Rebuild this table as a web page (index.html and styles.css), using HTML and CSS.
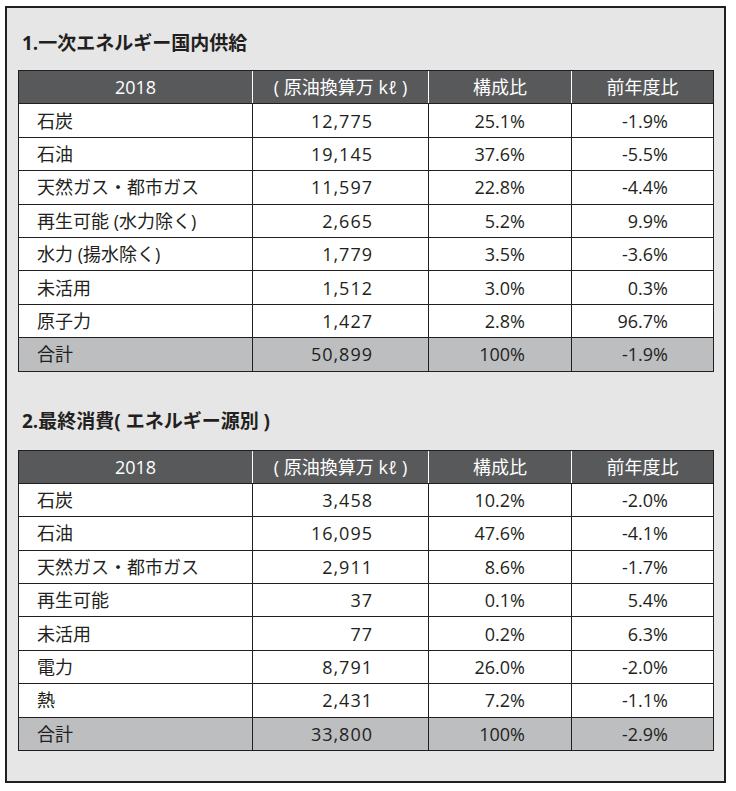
FILE: index.html
```html
<!DOCTYPE html>
<html lang="ja">
<head>
<meta charset="utf-8">
<title>エネルギー需給</title>
<link rel="stylesheet" href="styles.css">
</head>
<body>
<div class="panel">
  <h2 class="title">1.一次エネルギー国内供給</h2>
  <table class="data">
    <colgroup><col class="c1"><col class="c2"><col class="c3"><col class="c4"></colgroup>
    <thead>
      <tr><th>2018</th><th class="unit">( 原油換算万 kℓ )</th><th>構成比</th><th>前年度比</th></tr>
    </thead>
    <tbody>
      <tr><td>石炭</td><td class="num">12,775</td><td class="pct">25.1%</td><td class="yoy">-1.9%</td></tr>
      <tr><td>石油</td><td class="num">19,145</td><td class="pct">37.6%</td><td class="yoy">-5.5%</td></tr>
      <tr><td>天然ガス・都市ガス</td><td class="num">11,597</td><td class="pct">22.8%</td><td class="yoy">-4.4%</td></tr>
      <tr><td>再生可能 (水力除く)</td><td class="num">2,665</td><td class="pct">5.2%</td><td class="yoy">9.9%</td></tr>
      <tr><td>水力 (揚水除く)</td><td class="num">1,779</td><td class="pct">3.5%</td><td class="yoy">-3.6%</td></tr>
      <tr><td>未活用</td><td class="num">1,512</td><td class="pct">3.0%</td><td class="yoy">0.3%</td></tr>
      <tr><td>原子力</td><td class="num">1,427</td><td class="pct">2.8%</td><td class="yoy">96.7%</td></tr>
      <tr class="total"><td>合計</td><td class="num">50,899</td><td class="pct">100%</td><td class="yoy">-1.9%</td></tr>
    </tbody>
  </table>

  <h2 class="title second">2.最終消費( エネルギー源別 )</h2>
  <table class="data">
    <colgroup><col class="c1"><col class="c2"><col class="c3"><col class="c4"></colgroup>
    <thead>
      <tr><th>2018</th><th class="unit">( 原油換算万 kℓ )</th><th>構成比</th><th>前年度比</th></tr>
    </thead>
    <tbody>
      <tr><td>石炭</td><td class="num">3,458</td><td class="pct">10.2%</td><td class="yoy">-2.0%</td></tr>
      <tr><td>石油</td><td class="num">16,095</td><td class="pct">47.6%</td><td class="yoy">-4.1%</td></tr>
      <tr><td>天然ガス・都市ガス</td><td class="num">2,911</td><td class="pct">8.6%</td><td class="yoy">-1.7%</td></tr>
      <tr><td>再生可能</td><td class="num">37</td><td class="pct">0.1%</td><td class="yoy">5.4%</td></tr>
      <tr><td>未活用</td><td class="num">77</td><td class="pct">0.2%</td><td class="yoy">6.3%</td></tr>
      <tr><td>電力</td><td class="num">8,791</td><td class="pct">26.0%</td><td class="yoy">-2.0%</td></tr>
      <tr><td>熱</td><td class="num">2,431</td><td class="pct">7.2%</td><td class="yoy">-1.1%</td></tr>
      <tr class="total"><td>合計</td><td class="num">33,800</td><td class="pct">100%</td><td class="yoy">-2.9%</td></tr>
    </tbody>
  </table>
</div>
</body>
</html>
```

FILE: styles.css
```css
html, body {
  margin: 0;
  padding: 0;
  background: #ffffff;
}

body {
  font-family: "Open Sans", "Noto Sans CJK JP", sans-serif;
  color: #231f20;
}

.panel {
  box-sizing: border-box;
  width: 721px;
  margin: 6px 0 0 5px;
  padding: 22px 11px 30px 11px;
  background: #e6e6e6;
  border: 2px solid #231f20;
}

.title {
  margin: 0 0 14px 0;
  padding-left: 4px;
  font-size: 19px;
  line-height: 26px;
  font-weight: 700;
  color: #231f20;
}

.title.second {
  margin-top: 36px;
  margin-bottom: 16px;
}

.data {
  width: 695px;
  table-layout: fixed;
  border-collapse: collapse;
  border: 1px solid #231f20;
  font-size: 18px;
  line-height: 24px;
}

.c1 { width: 234px; }
.c2 { width: 176px; }
.c3 { width: 143px; }
.c4 { width: 142px; }

.data tr {
  height: 33.4px;
}

.data th {
  padding: 0;
  background: #58595b;
  color: #ffffff;
  font-weight: 400;
  text-align: center;
  border-top: 1px solid #231f20;
  border-bottom: 1px solid #231f20;
  border-left: 1px solid #ffffff;
  white-space: nowrap;
}

.data th:first-child {
  border-left: 1px solid #231f20;
}

.data td {
  padding: 0;
  background: #ffffff;
  border: 1px solid #231f20;
  white-space: nowrap;
}

.data td:first-child {
  padding-left: 18px;
  text-align: left;
}

.data td.num {
  text-align: right;
  padding-right: 55px;
  letter-spacing: 1px;
}

.data td.pct {
  text-align: right;
  padding-right: 46px;
}

.data td.yoy {
  text-align: right;
  padding-right: 45px;
}

.data tr.total td {
  background: #bcbec0;
}
```
